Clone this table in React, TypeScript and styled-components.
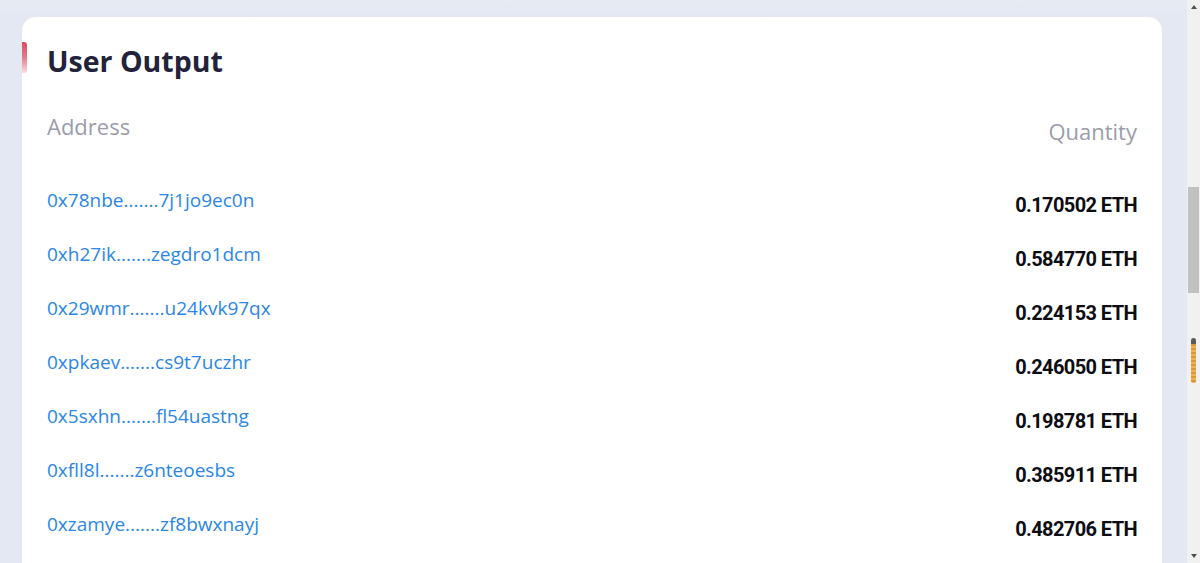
import React from "react";
import styled, { createGlobalStyle } from "styled-components";

const Global = createGlobalStyle`
  html, body { margin: 0; padding: 0; }
  body {
    background: #e3e8f2;
    font-family: "Open Sans", "Noto Sans", sans-serif;
    overflow: hidden;
  }
`;

const Page = styled.div`
  display: flex;
  width: 1200px;
  height: 563px;
  overflow: hidden;
  background: linear-gradient(90deg, #dde3ef 0px, #e3e8f2 22px);
`;

const Main = styled.main`
  flex: 1;
  padding: 17px 25px 0 22px;
  background: linear-gradient(180deg, #e7ebf4 0px, #e3e8f2 17px);
`;

const Card = styled.section`
  background: #ffffff;
  border-radius: 14px 14px 0 0;
  padding: 25px 25px 0 0;
  min-height: 620px;
`;

const TitleRow = styled.div`
  display: flex;
  align-items: flex-start;
  gap: 20px;
`;

const Accent = styled.span`
  width: 5px;
  height: 31px;
  border-radius: 0 3px 3px 0;
  background: linear-gradient(180deg, #d94b5f 0%, #e57d8c 50%, #f8dde1 100%);
`;

const Title = styled.h1`
  margin: 1px 0 0;
  font-size: 28.5px;
  line-height: 36px;
  font-weight: 700;
  color: #22233a;
`;

const Table = styled.div`
  margin-left: 25px;
`;

const HeadRow = styled.div`
  display: flex;
  justify-content: space-between;
  align-items: flex-start;
  margin-top: 32px;
`;

const HeadCell = styled.span<{ $offset?: number }>`
  font-size: 22px;
  line-height: 30px;
  color: #9c9cab;
  margin-top: ${(p) => p.$offset ?? 0}px;
`;

const List = styled.div`
  margin-top: 41px;
  display: flex;
  flex-direction: column;
`;

const Row = styled.div`
  display: flex;
  justify-content: space-between;
  align-items: flex-start;
  height: 54px;
`;

const AddrLink = styled.a`
  font-size: 19px;
  line-height: 26px;
  color: #2b86e6;
  text-decoration: none;
  cursor: pointer;
`;

const Amount = styled.span`
  font-family: Roboto, "Liberation Sans", sans-serif;
  font-weight: 700;
  font-size: 20px;
  line-height: 26px;
  letter-spacing: -0.6px;
  color: #0d0d12;
  margin-top: 5px;
`;

const ScrollTrack = styled.div`
  width: 13px;
  flex: none;
  background: #f1f1f1;
  display: flex;
  flex-direction: column;
  align-items: center;
`;

const Arrow = styled.div<{ $down?: boolean }>`
  width: 0;
  height: 0;
  border-left: 3.5px solid transparent;
  border-right: 3.5px solid transparent;
  ${(p) =>
    p.$down
      ? "border-top: 4px solid #505050; margin-top: auto; margin-bottom: 5px;"
      : "border-bottom: 4px solid #505050; margin-top: 5px;"}
`;

const Thumb = styled.div`
  width: 11px;
  height: 106px;
  margin-top: 178px;
  background: #c1c1c1;
`;

const Grip = styled.div`
  width: 5px;
  height: 45px;
  margin-top: 45px;
  border-radius: 3px 3px 2px 2px;
  background: repeating-linear-gradient(
      180deg,
      #d99a34 0px,
      #d99a34 2px,
      #e8b55a 2px,
      #e8b55a 4px
    );
  border-top: 6px solid #5a5a5a;
  box-sizing: border-box;
`;

const rows = [
  ["0x78nbe.......7j1jo9ec0n", "0.170502 ETH"],
  ["0xh27ik.......zegdro1dcm", "0.584770 ETH"],
  ["0x29wmr.......u24kvk97qx", "0.224153 ETH"],
  ["0xpkaev.......cs9t7uczhr", "0.246050 ETH"],
  ["0x5sxhn.......fl54uastng", "0.198781 ETH"],
  ["0xfll8l.......z6nteoesbs", "0.385911 ETH"],
  ["0xzamye.......zf8bwxnayj", "0.482706 ETH"],
];

export default function App() {
  return (
    <>
      <Global />
      <Page>
        <Main>
          <Card>
            <TitleRow>
              <Accent />
              <Title>User Output</Title>
            </TitleRow>
            <Table>
              <HeadRow>
                <HeadCell>Address</HeadCell>
                <HeadCell $offset={5}>Quantity</HeadCell>
              </HeadRow>
              <List>
                {rows.map(([addr, qty]) => (
                  <Row key={addr}>
                    <AddrLink>{addr}</AddrLink>
                    <Amount>{qty}</Amount>
                  </Row>
                ))}
              </List>
            </Table>
          </Card>
        </Main>
        <ScrollTrack>
          <Arrow />
          <Thumb />
          <Grip />
          <Arrow $down />
        </ScrollTrack>
      </Page>
    </>
  );
}
